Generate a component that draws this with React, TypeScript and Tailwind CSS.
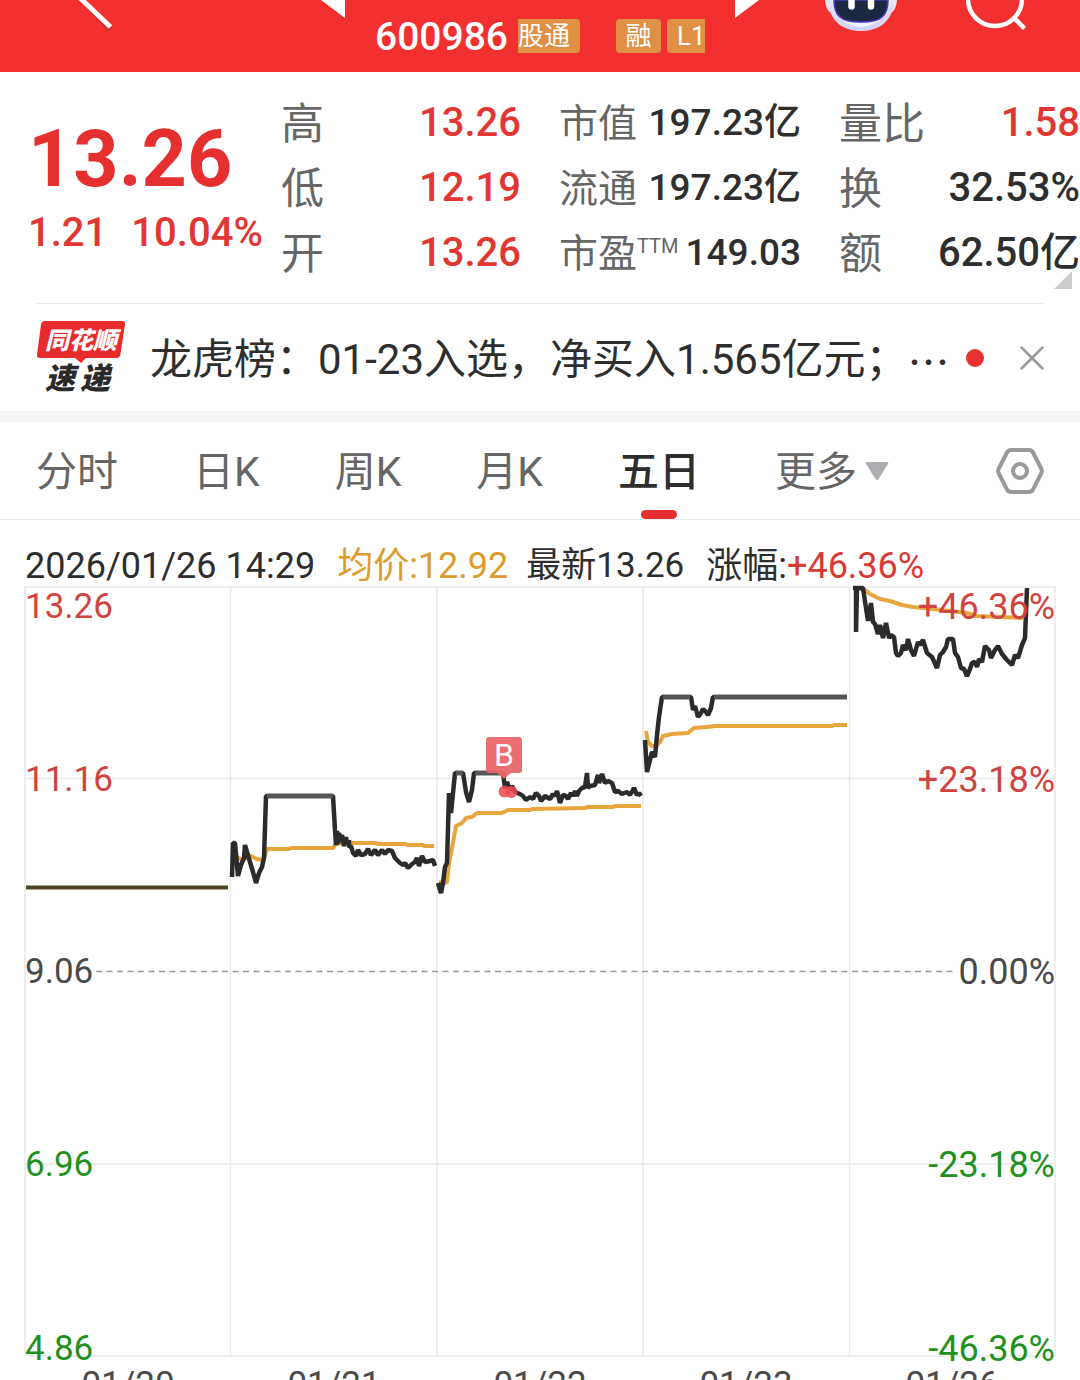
import React from "react";

type Tone = "red" | "dark";

const toneClass: Record<Tone, string> = {
  red: "text-[#e23632]",
  dark: "text-[#2e2e2e]",
};

function Stat({
  label,
  sup,
  value,
  tone,
  small,
}: {
  label: string;
  sup?: string;
  value: string;
  tone: Tone;
  small?: boolean;
}) {
  return (
    <div className="flex h-[65px] items-center justify-between whitespace-nowrap">
      <dt className={small ? "flex pt-1 text-[39px] leading-[60px] text-[#666]" : "pt-1 text-[43px] leading-[60px] text-[#666]"}>
        {label}
        {sup && <sup className="top-0 text-[20px] leading-[44px]">{sup}</sup>}
      </dt>
      <dd className={`pt-0.5 font-medium ${toneClass[tone]} ${small ? "text-[37px] leading-[60px]" : "text-[40px] leading-[60px]"}`}>
        {value}
      </dd>
    </div>
  );
}

function Header() {
  return (
    <header className="grid h-[72px] grid-cols-[1fr_438px_1fr] items-start overflow-hidden bg-[#f2302f] text-white">
      <div className="pl-[77px]">
        <button type="button" aria-label="返回" className="block">
          <svg width="40" height="34" viewBox="0 0 40 34" className="block">
            <path d="M1 -4 L33.5 29.5" stroke="#a82020" strokeOpacity=".45" strokeWidth="5" />
            <path d="M1 -4 L33.5 27" stroke="#fff" strokeWidth="5" />
          </svg>
        </button>
      </div>
      <div className="flex items-start justify-between">
        <button type="button" aria-label="上一只">
          <svg width="24" height="19" viewBox="0 0 24 19" className="block">
            <path d="M0 0H24V18Z" fill="#fff" />
          </svg>
        </button>
        <div className="flex h-[72px] items-center">
          <h1 className="w-[131px] pt-0.5 text-[39px] leading-[46px] font-medium">600986</h1>
          <span className="ml-3 h-[34px] w-[62px] rounded-r bg-[#e09044] text-[26px] leading-[35px] whitespace-nowrap">股通</span>
          <span className="ml-9 h-[34px] w-[45px] rounded bg-[#e09044] text-center text-[26px] leading-[35px]">融</span>
          <span className="ml-1.5 h-[34px] w-[38px] rounded-l bg-[#e09044] pl-2.5 text-[26px] leading-[35px]">L1</span>
        </div>
        <button type="button" aria-label="下一只">
          <svg width="24" height="19" viewBox="0 0 24 19" className="block">
            <path d="M0 0H24L0 18Z" fill="#fff" />
          </svg>
        </button>
      </div>
      <div className="flex items-start gap-[67px] pl-[66px]">
        <button type="button" aria-label="智能助手">
          <svg width="72" height="32" viewBox="0 0 72 32" className="block">
            <defs>
              <linearGradient id="shell" x1="0" y1="0" x2="0" y2="1">
                <stop offset="0" stopColor="#e6e4fa" />
                <stop offset="1" stopColor="#d3d1f4" />
              </linearGradient>
            </defs>
            <path d="M0 0H72Q71 10 67 12Q59 31 36 31Q13 31 5 12Q1 10 0 0Z" fill="url(#shell)" />
            <path d="M7 0H65Q64 12 60 15Q53 25 36 27Q19 25 12 15Q8 12 7 0Z" fill="#f3f2ff" />
            <path d="M9 0H63Q63 12 57 17Q52 22 36 22Q20 22 15 17Q9 12 9 0Z" fill="#1c2842" stroke="#4638b8" strokeWidth="1.600" />
            <path d="M26.500 -4V6.500M46 -4V6.500" stroke="#fff" strokeWidth="6.500" strokeLinecap="round" />
          </svg>
        </button>
        <button type="button" aria-label="搜索">
          <svg width="62" height="32" viewBox="0 0 62 32" className="block" fill="none" stroke="#fff" strokeWidth="4.500">
            <circle cx="31" cy="-1" r="27" />
            <path d="M50 18L60.500 28.500" />
          </svg>
        </button>
      </div>
    </header>
  );
}

function Quote() {
  return (
    <section className="relative grid grid-cols-[215fr_240fr_242fr_241fr] gap-x-[38px] pt-[17px] pb-[19px] pl-7">
      <div className="min-w-0 whitespace-nowrap text-[#e63030]">
        <p className="pt-7 text-[79px] leading-[84px] font-bold">13.26</p>
        <p className="flex gap-6 pt-2 text-[40px] leading-[48px] font-medium text-[#e23632]">
          <span>1.21</span>
          <span>10.04%</span>
        </p>
      </div>
      <dl>
        <Stat label="高" value="13.26" tone="red" />
        <Stat label="低" value="12.19" tone="red" />
        <Stat label="开" value="13.26" tone="red" />
      </dl>
      <dl>
        <Stat small label="市值" value="197.23亿" tone="dark" />
        <Stat small label="流通" value="197.23亿" tone="dark" />
        <Stat small label="市盈" sup="TTM" value="149.03" tone="dark" />
      </dl>
      <dl>
        <Stat label="量比" value="1.58" tone="red" />
        <Stat label="换" value="32.53%" tone="dark" />
        <Stat label="额" value="62.50亿" tone="dark" />
      </dl>
      <svg width="18" height="18" viewBox="0 0 18 18" className="absolute right-2 bottom-3.5">
        <path d="M18 0V18H0Z" fill="#ccc" />
      </svg>
    </section>
  );
}

function News() {
  return (
    <section className="mx-9 flex h-[108px] items-center border-t border-[#ececec]">
      <svg width="90" height="76" viewBox="0 0 90 76" role="img" aria-label="同花顺速递" className="shrink-0 overflow-visible">
        <path
          d="M9 1H86Q89.500 1 89 4.500L84.500 34Q84 38 80 38H50L45 43L39 38H4Q0.500 38 1 34.500L5 4.500Q5.500 1 9 1Z"
          fill="#e82c2e"
        />
        <text x="9" y="29" fill="#fff" fontSize="24" fontWeight="900" fontStyle="italic" fontFamily="Noto Sans CJK SC, sans-serif">
          同花顺
        </text>
        <text x="9" y="69" fill="#2a2a2a" fontSize="30" fontWeight="900" fontStyle="italic" fontFamily="Noto Sans CJK SC, sans-serif">
          速
        </text>
        <text x="44" y="69" fill="#2a2a2a" fontSize="30" fontWeight="900" fontStyle="italic" fontFamily="Noto Sans CJK SC, sans-serif">
          递
        </text>
      </svg>
      <a href="#news" className="ml-6 flex min-w-0 flex-1 pt-1 text-[42px] leading-[60px] whitespace-nowrap text-[#2e2e2e]">
        龙虎榜：01-23入选，净买入1.565亿元；
        <span className="font-['Noto_Sans_CJK_SC',sans-serif]">…</span>
      </a>
      <span className="size-[18px] shrink-0 rounded-full bg-[#e93030]" />
      <button type="button" aria-label="关闭" className="ml-9">
        <svg width="24" height="24" viewBox="0 0 24 24" className="block" stroke="#999" strokeWidth="2.500" strokeLinecap="round">
          <path d="M1.500 1.500L22.500 22.500M22.500 1.500L1.500 22.500" />
        </svg>
      </button>
    </section>
  );
}

const tabs = ["分时", "日K", "周K", "月K", "五日"];

function Tabs() {
  return (
    <nav className="flex h-[98px] items-stretch justify-between border-b border-[#ececec] px-9 text-[41px] leading-[100px] text-[#666]">
      {tabs.map((t) =>
        t === "五日" ? (
          <button key={t} type="button" aria-current="page" className="relative font-medium text-[#2e2e2e]">
            {t}
            <span className="absolute bottom-0 left-1/2 h-[9px] w-9 -translate-x-1/2 rounded-full bg-[#e62f30]" />
          </button>
        ) : (
          <button key={t} type="button">
            {t}
          </button>
        ),
      )}
      <button type="button" className="flex items-center gap-2">
        <span className="pt-0.5">更多</span>
        <svg width="24" height="20" viewBox="0 0 24 20">
          <path d="M2 1H22Q24 1 23 3L13.500 18Q12 20 10.500 18L1 3Q0 1 2 1Z" fill="#aeacb0" />
        </svg>
      </button>
      <button type="button" aria-label="设置" className="ml-8">
        <svg width="48" height="48" viewBox="0 0 48 48" className="block" fill="none" stroke="#999" strokeWidth="4">
          <path
            strokeLinejoin="round"
            d="M15 3H33Q35.500 3 36.800 5.200L45.200 21.500Q46.400 24 45.200 26.500L36.800 42.800Q35.500 45 33 45H15Q12.500 45 11.200 42.800L2.800 26.500Q1.600 24 2.800 21.500L11.200 5.200Q12.500 3 15 3Z"
          />
          <circle cx="24" cy="24" r="7" />
        </svg>
      </button>
    </nav>
  );
}

const priceLines = [
  "232,877 233,843 235,843 238,876 241,865 244,858 245,845 247,852 250,862 253,872 256,883 259,873 262,867 264,858 266,796 333,796 335,830 336,845 337,831 338,844 339,833 341,842 342,835 344,846 346,837 347,843 349,840 349,847 351,846 353,853 356,856 358,850 361,855 365,854 368,849 371,855 375,850 378,855 382,850 385,854 388,850 392,851 395,858 400,863 403,865 405,863 408,868 412,864 415,862 417,858 419,866 422,856 425,862 430,861 433,860 435,866",
  "438,883 441,893 443,883 445,867 447,863 449,793 451,813 453,793 455,773 463,773 466,792 469,802 472,790 474,773 503,773 505,788 507,782 510,790 512,786 515,792 520,794 523,796 526,800 530,797 533,799 536,793 539,796 541,801 545,796 550,799 553,794 555,796 557,791 560,803 563,795 566,796 568,799 571,793 573,796 575,791 577,796 579,791 582,788 585,787 587,773 588,788 590,786 595,785 598,775 599,783 602,774 605,783 608,781 612,783 615,792 618,791 622,794 627,792 630,795 634,788 637,795 639,793 641,796",
  "645,740 647,772 650,760 652,752 655,757 657,735 659,717 662,697 691,697 693,710 695,706 698,717 701,713 703,709 706,712 708,715 711,708 713,697 847,697",
  "853,588 856,588 856,632 857,588 863,588 866,608 868,621 871,603 873,622 875,624 878,634 880,625 883,638 886,623 889,638 891,635 894,637 896,653 898,656 901,653 903,645 906,650 908,639 911,650 914,656 918,642 920,645 923,640 927,653 932,657 937,668 940,655 943,652 946,647 948,639 953,639 955,653 958,657 961,668 964,669 967,676 970,669 972,663 975,662 977,667 979,659 982,662 985,646 989,650 991,658 995,650 998,646 1002,654 1007,660 1012,665 1015,655 1018,658 1022,645 1025,638 1027,588",
];

const averageLines = [
  "237,857 242,860 251,856 257,859 262,860 264,858 267,849 288,849 292,848 333,848 335,845 340,843 375,843 378,844 405,844 408,845 422,845 425,846 434,846",
  "439,882 445,883 447,882 449,863 452,848 454,837 456,826 462,823 466,818 472,817 477,813 502,813 508,810 530,810 532,809 585,808 588,807 613,807 615,806 641,806",
  "646,731 648,742 652,746 656,746 660,742 663,736 672,734 688,733 694,728 707,727 715,726 832,726 834,725 847,725",
  "857,588 865,590 870,594 880,599 890,601 902,605 913,607 933,609 967,613 977,616 1023,618",
];

const limitLines = ["M267 796H333", "M456 773H463", "M475 773H502", "M663 697H690", "M714 697H847"];

const scale = [
  { price: "13.26", pct: "+46.36%", cls: "top-0.5 text-[#cf4440]" },
  { price: "11.16", pct: "+23.18%", cls: "top-1/4 -translate-y-1/2 text-[#cf4440]" },
  { price: "9.06", pct: "0.00%", cls: "top-1/2 -translate-y-1/2 text-[#4a4a4a]" },
  { price: "6.96", pct: "-23.18%", cls: "top-3/4 -translate-y-1/2 text-[#1f9120]" },
  { price: "4.86", pct: "-46.36%", cls: "-bottom-2.5 text-[#1f9120]" },
];

const dates = ["01/20", "01/21", "01/22", "01/23", "01/26"];

function Chart() {
  return (
    <section className="px-[25px] pt-[22px]">
      <div className="flex h-[45px] gap-[22px] text-[36px] leading-[48px] whitespace-nowrap text-[#2e2e2e]">
        <span>2026/01/26 14:29</span>
        <span className="text-[#dd9b2e]">均价:12.92</span>
        <span className="-ml-1 text-[35px]">最新13.26</span>
        <span>
          涨幅:<span className="text-[#d93a36]">+46.36%</span>
        </span>
      </div>
      <div className="relative">
        <svg viewBox="25 587 1030 770" className="block h-auto w-full overflow-visible" fill="none">
          <g stroke="#e9e9e9" strokeWidth="1.500">
            <path d="M25 587H1055V1356H25ZM25 778.500H1055M25 1164H1055" />
            <path d="M230.500 587V1356M437 587V1356M643 587V1356M849.500 587V1356" />
          </g>
          <path d="M96 971.500H953" stroke="#999" strokeWidth="1.500" strokeDasharray="6 4.500" />
          <g stroke="#e6a63c" strokeWidth="4" strokeLinejoin="round">
            {averageLines.map((p) => (
              <polyline key={p} points={p} />
            ))}
          </g>
          <path d="M26 887.500H228" stroke="#4f4420" strokeWidth="4" />
          <g stroke="#2b2b2b" strokeWidth="4.500" strokeLinejoin="bevel">
            {priceLines.map((p) => (
              <polyline key={p} points={p} />
            ))}
          </g>
          <path d={limitLines.join("")} stroke="#555" strokeWidth="4.500" />
          <g fill="#ee4a50" fillOpacity=".85">
            <circle cx="504.500" cy="791.500" r="6" />
            <circle cx="511.500" cy="792" r="6" />
          </g>
          <path d="M489 737H519Q522 737 522 740V770Q522 773 519 773H511L504 779L497 773H489Q486 773 486 770V740Q486 737 489 737Z" fill="#ea6567" fillOpacity=".94" />
          <text x="504" y="766" textAnchor="middle" fill="#fff" fontSize="32" fontFamily="Roboto, sans-serif">
            B
          </text>
        </svg>
        {scale.map((s) => (
          <div key={s.price} className={`absolute inset-x-0 flex justify-between text-[36px] leading-[36px] ${s.cls}`}>
            <span className="text-[35px]">{s.price}</span>
            <span>{s.pct}</span>
          </div>
        ))}
      </div>
      <div className="grid grid-cols-5 pt-2.5 text-center text-[35px] leading-[36px] text-[#4a4a4a]">
        {dates.map((d) => (
          <span key={d}>{d}</span>
        ))}
      </div>
    </section>
  );
}

export default function App() {
  return (
    <main className="h-screen overflow-hidden bg-white font-['Roboto','Noto_Sans_CJK_SC',sans-serif]">
      <Header />
      <Quote />
      <News />
      <div className="h-[11px] bg-[#f6f6f6]" />
      <Tabs />
      <Chart />
    </main>
  );
}
